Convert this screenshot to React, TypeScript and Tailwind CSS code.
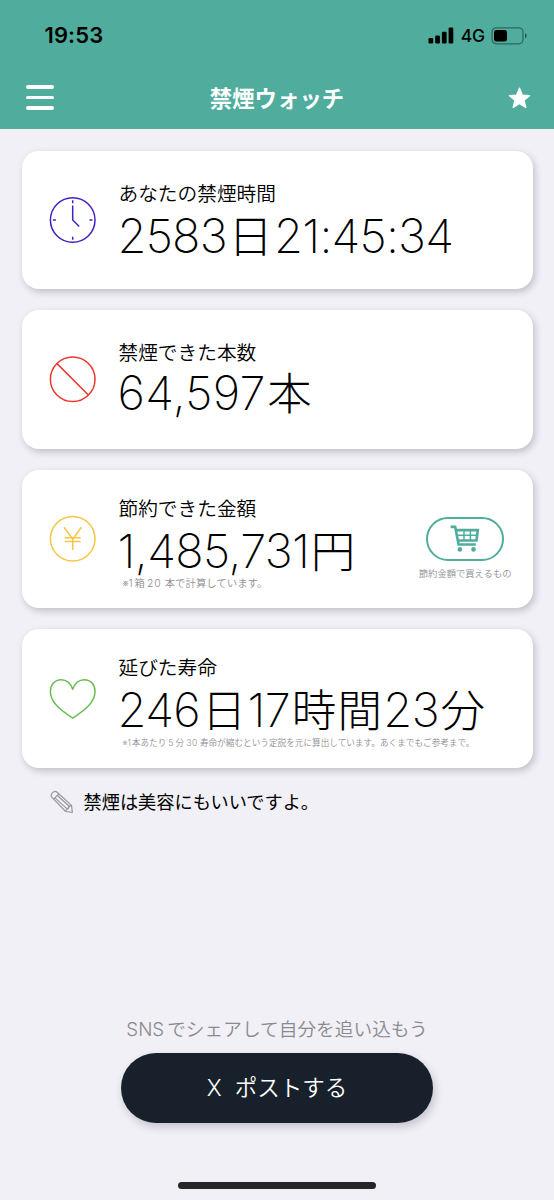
import type { ReactNode } from 'react';

const INTER = "font-['Inter','Noto_Sans_CJK_JP',sans-serif]";

function ClockIcon() {
    return (
        <svg width="48" height="48" viewBox="0 0 48 48" fill="none" stroke="#4420c4" strokeWidth="1.5">
            <circle cx="23.7" cy="24" r="22.3" />
            <path d="M23.7 4.2v3M23.7 40.8v3M3.9 24h3M40.5 24h3" />
            <path d="M23.7 9.5V24l6.5 6.5" />
        </svg>
    );
}

function BanIcon() {
    return (
        <svg width="48" height="48" viewBox="0 0 48 48" fill="none" stroke="#e8372c" strokeWidth="1.5">
            <circle cx="23.7" cy="23.3" r="22.3" />
            <path d="M8 7.6L39.4 39" />
        </svg>
    );
}

function YenIcon() {
    return (
        <svg width="48" height="48" viewBox="0 0 48 48" fill="none" stroke="#f6c544" strokeWidth="1.5">
            <circle cx="23.7" cy="23.8" r="22.3" />
            <path d="M15 12.3l8.7 11.9 8.7-11.9M23.7 24v11M15.7 22.7h16M15.7 26.6h16" />
        </svg>
    );
}

function HeartIcon() {
    return (
        <svg width="48" height="48" viewBox="0.3 0 48 48" fill="none" stroke="#6cbd53" strokeWidth="1.5" strokeLinejoin="round">
            <path d="M24 14.3C21.8 7.8 17.3 4.7 12.4 4.7 6 4.7 1.7 9.8 1.7 16.4 1.7 27 11 34.5 24 43.2 37 34.5 46.3 27 46.3 16.4 46.3 9.8 42 4.7 35.6 4.7 30.7 4.7 26.2 7.8 24 14.3z" />
        </svg>
    );
}

function CartIcon() {
    return (
        <svg width="30" height="27" viewBox="0 0 30 27" fill="none" stroke="#50ad9d">
            <path d="M0.6 1.9h4.6l3.4 17.6h17.2" strokeWidth="2.6" />
            <path d="M6.2 5.1h21.6l-1.3 10.4H8" strokeWidth="2.6" />
            <path d="M7 10.3h20M14 5v10.5M20.4 5v10.5" strokeWidth="1.5" />
            <circle cx="9.9" cy="24.4" r="2.3" fill="#50ad9d" stroke="none" />
            <circle cx="23.5" cy="24.4" r="2.3" fill="#50ad9d" stroke="none" />
        </svg>
    );
}

function PencilIcon() {
    return (
        <svg width="24" height="24" viewBox="0 0 24 24" fill="none" stroke="#99999c" strokeWidth="1.2" strokeLinejoin="round">
            <path d="M2 7.4C0.7 6 0.9 4.4 2.4 2.8 4 1.2 5.7 1 7.1 2.3L21.5 15.4 22.4 22.4 15.6 21.5z" />
            <path d="M3.6 9.1l5.2-5.2M15.6 21.5c0.3-1.8 1-2.4 2.4-2.6 0.2-1.6 1.3-3 3.5-3.5M5 7.9l12.6 11.5M7.4 5.5L20 17" />
        </svg>
    );
}

function StatusBar() {
    return (
        <div className="flex h-[66px] items-start justify-between pr-[26px] pl-[44.5px] pt-[23px]">
            <span className="text-[22px] leading-6 font-semibold tracking-[0.1px]">19:53</span>
            <div className="flex items-center pt-px">
                <svg width="26" height="18" viewBox="0 0 26 18">
                    <rect x="0.5" y="11" width="4.7" height="5.5" rx="1.2" />
                    <rect x="7.2" y="8.5" width="4.7" height="8" rx="1.2" />
                    <rect x="13.9" y="4.7" width="4.7" height="11.8" rx="1.2" />
                    <rect x="20.6" y="0.5" width="4.7" height="16" rx="1.2" />
                </svg>
                <span className="ml-[7px] text-[17.5px] leading-6 font-[450] tracking-[-0.2px]">4G</span>
                <svg width="37" height="18" viewBox="0 0 37 18" className="ml-[6px]">
                    <rect x="1" y="0.8" width="31" height="16" rx="4.2" fill="none" stroke="#000" strokeOpacity="0.4" strokeWidth="1.3" />
                    <rect x="3" y="3" width="13" height="11.6" rx="2.4" />
                    <path d="M34 6.3c2.2 0.8 2.2 4.2 0 5z" fillOpacity="0.5" />
                </svg>
            </div>
        </div>
    );
}

function Unit({ children }: { children: ReactNode }) {
    return <span className="ml-[1.5px] text-[44.5px] font-light tracking-[1.3px]">{children}</span>;
}

function Value({ children, tracking = 'tracking-[-0.6px]' }: { children: ReactNode; tracking?: string }) {
    return <p className={`-ml-px pt-px text-[47px] leading-[50px] font-[240] ${tracking}`}>{children}</p>;
}

function Card({ icon, children, action }: { icon: ReactNode; children: ReactNode; action?: ReactNode }) {
    return (
        <section className="flex h-[138.5px] w-full rounded-[17px] bg-white shadow-[2px_3px_7px_rgba(40,35,60,0.24)]">
            <div className="flex w-[97px] shrink-0 items-center pl-[27px]">{icon}</div>
            <div className="whitespace-nowrap">{children}</div>
            {action}
        </section>
    );
}

export default function App() {
    return (
        <div className={`flex h-[1200px] w-[554px] flex-col overflow-hidden bg-[#f1f0f6] text-black ${INTER}`} lang="ja">
            <header className="h-[129px] shrink-0 bg-[#50ad9d]">
                <StatusBar />
                <nav className="flex h-[63px] items-center justify-between pr-[23px] pl-[26px]">
                    <div className="flex w-7 flex-col gap-[7px]">
                        <div className="h-[3.5px] rounded-full bg-white" />
                        <div className="h-[3.5px] rounded-full bg-white" />
                        <div className="h-[3.5px] rounded-full bg-white" />
                    </div>
                    <h1 className="mr-[8px] pt-[2px] text-[22.4px] leading-8 font-bold text-white">禁煙ウォッチ</h1>
                    <svg width="23" height="22" viewBox="0 0 23 22" fill="#fff" stroke="#fff" strokeWidth="1.4" strokeLinejoin="round">
                        <path d="M11.5 1.2l2.8 6.9 7.2 0.5-5.5 4.6 1.8 7.1-6.3-3.9-6.3 3.9 1.8-7.1L1.5 8.6l7.2-0.5z" />
                    </svg>
                </nav>
            </header>

            <main className="flex shrink-0 flex-col gap-[21px] pt-[21.8px] pr-[21px] pl-[21.5px]">
                <Card icon={<ClockIcon />}>
                    <p className="pt-[29px] pb-0.5 text-[19.7px] leading-7 font-[350]">あなたの禁煙時間</p>
                    <Value tracking="tracking-[-0.8px]">2583<Unit>日</Unit>21:45:34</Value>
                </Card>
                <Card icon={<BanIcon />}>
                    <p className="pt-[29px] text-[19.7px] leading-7 font-[350]">禁煙できた本数</p>
                    <Value tracking="tracking-[0.3px]">64,597<Unit>本</Unit></Value>
                </Card>
                <Card
                    icon={<YenIcon />}
                    action={
                        <div className="mr-[21.5px] ml-auto flex flex-col items-center pt-[47px]">
                            <button className="flex h-11 w-[78px] items-center justify-center rounded-full border-2 border-[#50ad9d]">
                                <CartIcon />
                            </button>
                            <p className="mt-[6px] text-[9.3px] leading-[14px] font-[350] text-[#8e8e93]">節約金額で買えるもの</p>
                        </div>
                    }
                >
                    <p className="pt-[25px] pb-0.5 text-[19.7px] leading-7 font-[350]">節約できた金額</p>
                    <Value>1,485,731<Unit>円</Unit></Value>
                    <p className="pl-1 text-[10.4px] leading-[14px] font-[350] text-[#8e8e93]">
                        ※1<span className="ml-[2px]">箱</span>
                        <span className="mr-[3px] ml-[2px] tracking-[1px]">20</span>本で計算しています。
                    </p>
                </Card>
                <Card icon={<HeartIcon />}>
                    <p className="pt-[25px] pb-0.5 text-[19.7px] leading-7 font-[350]">延びた寿命</p>
                    <Value>246<Unit>日</Unit>17<Unit>時間</Unit>23<Unit>分</Unit></Value>
                    <p className="pl-1 text-[8.65px] leading-[14px] font-[350] text-[#8e8e93]">
                        ※1<span className="ml-[1px]">本あたり</span>
                        <span className="mx-[2px]">5</span>分
                        <span className="mx-[2px] tracking-[0.6px]">30</span>寿命が縮むという定説を元に算出しています。あくまでもご参考まで。
                    </p>
                </Card>
            </main>

            <div className="mt-[20.5px] flex items-center gap-[9.5px] pl-[50px]">
                <PencilIcon />
                <p className="text-[18.2px] leading-7">禁煙は美容にもいいですよ。</p>
            </div>

            <footer className="mt-auto flex flex-col items-center">
                <p className="text-[18.7px] leading-7 font-[350] text-[#8a8a8e]"><span className="mr-[3px]">SNS</span>でシェアして自分を追い込もう</p>
                <button className="mt-[9.5px] flex h-[70px] w-[312px] items-center justify-center gap-[13px] rounded-full bg-[#17202b] text-[22.5px] font-[350] text-white shadow-[2px_4px_8px_rgba(40,35,60,0.22)]">
                    <span>X</span>
                    <span>ポストする</span>
                </button>
                <div className="mt-[58.5px] mb-[11.5px] h-[7px] w-[198px] rounded-full bg-[#262626]" />
            </footer>
        </div>
    );
}
